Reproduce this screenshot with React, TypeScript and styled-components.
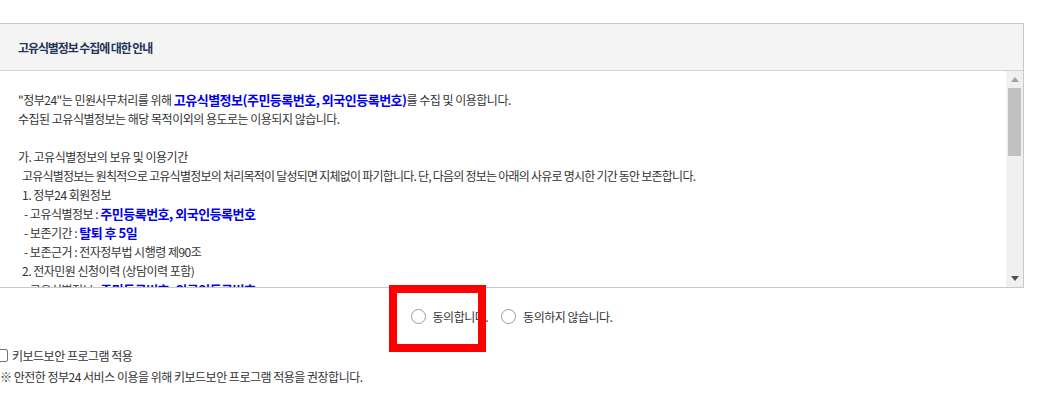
import React from "react";
import styled, { createGlobalStyle } from "styled-components";

const GlobalStyle = createGlobalStyle`
  html, body { margin: 0; padding: 0; background: #fff; overflow: hidden; }
  body { font-family: "Noto Sans CJK KR", "Noto Sans", sans-serif; color: #333; }
`;

const Page = styled.div`
  position: relative;
  width: 1057px;
  height: 401px;
  padding-top: 23px;
  box-sizing: border-box;
`;

const Box = styled.section`
  width: 1025px;
  margin-left: -1px;
  border: 1px solid #c8c8c8;
  box-sizing: border-box;
`;

const Header = styled.h2`
  margin: 0;
  height: 47px;
  box-sizing: border-box;
  display: flex;
  align-items: center;
  padding-left: 18px;
  background: #f4f4f4;
  border-bottom: 1px solid #d2d2d2;
  font-size: 12px;
  font-weight: 700;
  letter-spacing: -1.1px;
  color: #1d3557;
`;

const Body = styled.div`
  display: flex;
  height: 216px;
`;

const Content = styled.div`
  flex: 1;
  overflow: hidden;
  padding: 19px 0 0 18px;
  font-size: 12px;
  letter-spacing: -0.5px;
  line-height: 19px;
  color: #333;
`;

const Line = styled.div<{ $indent?: number; $spacing?: number }>`
  white-space: nowrap;
  padding-left: ${(p) => p.$indent ?? 0}px;
  min-height: 19px;
  ${(p) => (p.$spacing !== undefined ? `letter-spacing: ${p.$spacing}px;` : "")}
`;

const Strong = styled.strong`
  color: #0000ee;
  font-weight: 700;
  font-size: 13px;
`;

const Scrollbar = styled.div`
  width: 17px;
  background: #f0f0f0;
  display: flex;
  flex-direction: column;
  align-items: center;
`;

const ArrowBtn = styled.div`
  height: 17px;
  width: 17px;
  display: flex;
  align-items: center;
  justify-content: center;
`;

const Thumb = styled.div`
  width: 13px;
  height: 68px;
  background: #c1c1c1;
`;

const Track = styled.div`
  flex: 1;
`;

const RadioRow = styled.div`
  height: 57px;
  width: 1023px;
  display: flex;
  align-items: center;
  justify-content: center;
  gap: 13px;
  font-size: 12px;
  letter-spacing: -0.5px;
  color: #333;
`;

const RadioLabel = styled.label`
  display: flex;
  align-items: center;
  gap: 7px;
`;

const RadioCircle = styled.span`
  width: 13px;
  height: 13px;
  border-radius: 50%;
  border: 1px solid #9a9a9a;
  background: #fff;
  display: inline-block;
`;

const Options = styled.div`
  font-size: 12px;
  letter-spacing: -0.5px;
  line-height: 21px;
  color: #333;
`;

const CheckLine = styled.label`
  display: flex;
  align-items: center;
  gap: 4px;
  margin-left: -5px;
`;

const CheckBox = styled.span`
  width: 11px;
  height: 11px;
  border: 1px solid #767676;
  border-radius: 2px;
  background: #fff;
  display: inline-block;
`;

const Highlight = styled.div`
  position: absolute;
  left: 389px;
  top: 285px;
  width: 97px;
  height: 67px;
  border: 8px solid #ff0000;
  box-sizing: border-box;
  pointer-events: none;
`;

const Tri = ({ up, color }: { up?: boolean; color: string }) => (
  <svg width="8" height="5" viewBox="0 0 8 5">
    <polygon points={up ? "4,0 8,5 0,5" : "0,0 8,0 4,5"} fill={color} />
  </svg>
);

export default function App() {
  return (
    <>
      <GlobalStyle />
      <Page>
        <Box>
          <Header>고유식별정보 수집에 대한 안내</Header>
          <Body>
            <Content>
              <Line>
                "정부24"는 민원사무처리를 위해 <Strong>고유식별정보(주민등록번호, 외국인등록번호)</Strong>를 수집 및 이용합니다.
              </Line>
              <Line>수집된 고유식별정보는 해당 목적이외의 용도로는 이용되지 않습니다.</Line>
              <Line />
              <Line>가. 고유식별정보의 보유 및 이용기간</Line>
              <Line $indent={4} $spacing={-0.77}>
                고유식별정보는 원칙적으로 고유식별정보의 처리목적이 달성되면 지체없이 파기합니다. 단, 다음의 정보는 아래의 사유로 명시한 기간 동안 보존합니다.
              </Line>
              <Line $indent={4}>1. 정부24 회원정보</Line>
              <Line $indent={6}>
                - 고유식별정보 : <Strong>주민등록번호, 외국인등록번호</Strong>
              </Line>
              <Line $indent={6}>
                - 보존기간 : <Strong>탈퇴 후 5일</Strong>
              </Line>
              <Line $indent={6}>- 보존근거 : 전자정부법 시행령 제90조</Line>
              <Line $indent={4}>2. 전자민원 신청이력 (상담이력 포함)</Line>
              <Line $indent={6}>
                - 고유식별정보 : <Strong>주민등록번호, 외국인등록번호</Strong>
              </Line>
            </Content>
            <Scrollbar>
              <ArrowBtn>
                <Tri up color="#a3a3a3" />
              </ArrowBtn>
              <Thumb />
              <Track />
              <ArrowBtn>
                <Tri color="#505050" />
              </ArrowBtn>
            </Scrollbar>
          </Body>
        </Box>
        <RadioRow>
          <RadioLabel>
            <RadioCircle />
            동의합니다.
          </RadioLabel>
          <RadioLabel>
            <RadioCircle />
            동의하지 않습니다.
          </RadioLabel>
        </RadioRow>
        <Options>
          <CheckLine>
            <CheckBox />
            키보드보안 프로그램 적용
          </CheckLine>
          <div>※ 안전한 정부24 서비스 이용을 위해 키보드보안 프로그램 적용을 권장합니다.</div>
        </Options>
        <Highlight />
      </Page>
    </>
  );
}
